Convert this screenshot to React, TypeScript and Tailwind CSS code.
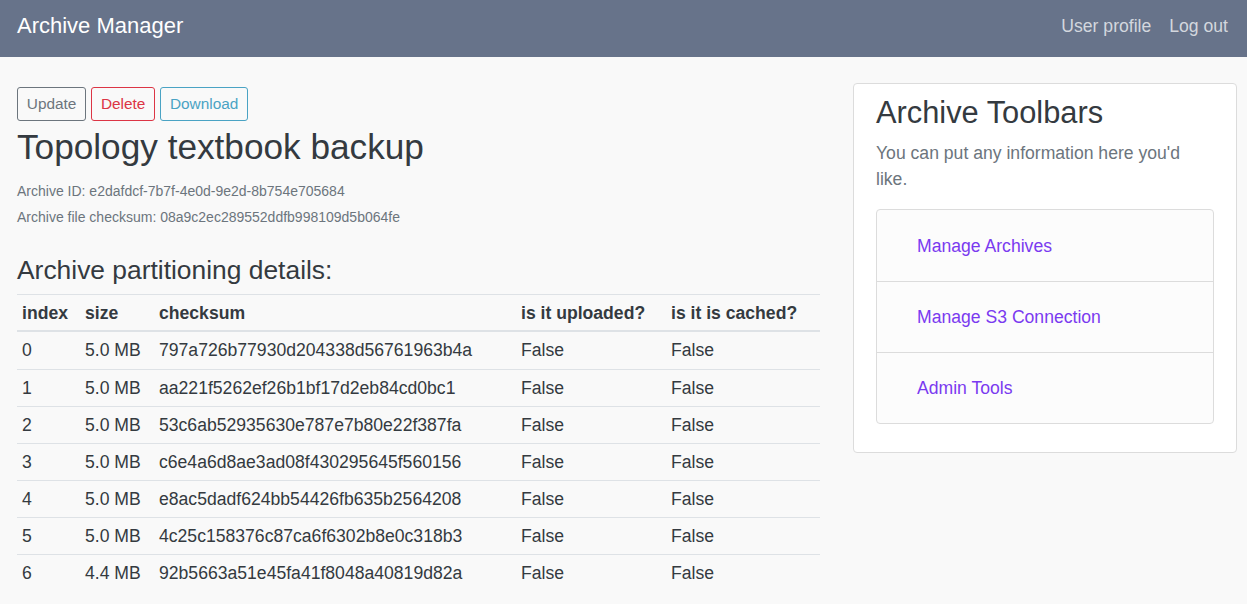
import React from "react";

const rows = [
  ["0", "5.0 MB", "797a726b77930d204338d56761963b4a"],
  ["1", "5.0 MB", "aa221f5262ef26b1bf17d2eb84cd0bc1"],
  ["2", "5.0 MB", "53c6ab52935630e787e7b80e22f387fa"],
  ["3", "5.0 MB", "c6e4a6d8ae3ad08f430295645f560156"],
  ["4", "5.0 MB", "e8ac5dadf624bb54426fb635b2564208"],
  ["5", "5.0 MB", "4c25c158376c87ca6f6302b8e0c318b3"],
  ["6", "4.4 MB", "92b5663a51e45fa41f8048a40819d82a"],
];

export default function App() {
  return (
    <div
      className="min-h-[604px] bg-[#f9f9f9] text-[#343a40] text-[17.6px] leading-[26.4px]"
      style={{ fontFamily: '"Liberation Sans", Arial, sans-serif' }}
    >
      <nav className="h-[57px] bg-[#67738a] flex items-center justify-between pl-[17px] pr-[19px] pb-[4px]">
        <span className="text-white text-[22px]">Archive Manager</span>
        <div className="flex gap-[18px] text-[#d3d7de]">
          <span>User profile</span>
          <span>Log out</span>
        </div>
      </nav>

      <div className="flex pl-[17px] pr-[10px] pt-[26px] gap-[33px]">
        <div className="w-[803px] pt-[4px]">
          <div className="flex gap-[4.9px]">
            <button className="h-[34px] px-[8.8px] border border-[#6c757d] text-[#6c757d] rounded-[3px] text-[15.4px]">
              Update
            </button>
            <button className="h-[34px] px-[8.8px] border border-[#dc3545] text-[#dc3545] rounded-[3px] text-[15.4px]">
              Delete
            </button>
            <button className="h-[34px] px-[8.8px] border border-[#4aa3c4] text-[#4aa3c4] rounded-[3px] text-[15.4px]">
              Download
            </button>
          </div>
          <h2 className="text-[35.2px] leading-[42px] mt-[5px] text-[#343a40]">
            Topology textbook backup
          </h2>
          <div className="mt-[10px] text-[14px] leading-[26px] text-[#6c757d]">
            <div>Archive ID: e2dafdcf-7b7f-4e0d-9e2d-8b754e705684</div>
            <div>Archive file checksum: 08a9c2ec289552ddfb998109d5b064fe</div>
          </div>
          <h4 className="mt-[24px] text-[26.4px] leading-[32px] mb-[8px]">
            Archive partitioning details:
          </h4>
          <table className="w-full table-fixed border-collapse">
            <colgroup>
              <col className="w-[63px]" />
              <col className="w-[74px]" />
              <col className="w-[362px]" />
              <col className="w-[150px]" />
              <col />
            </colgroup>
            <thead>
              <tr className="text-left font-bold">
                {["index", "size", "checksum", "is it uploaded?", "is it is cached?"].map((h) => (
                  <th
                    key={h}
                    className="border-t border-t-[#dee2e6] border-b-2 border-b-[#dee2e6] px-[5px] pt-[5px] pb-[4px] leading-[26px] font-bold whitespace-nowrap"
                  >
                    {h}
                  </th>
                ))}
              </tr>
            </thead>
            <tbody>
              {rows.map((r, i) => {
                const cls =
                  i === 0
                    ? "border-t border-t-[#dee2e6] px-[5px] pt-[5px] pb-[6px] leading-[26px]"
                    : "border-t border-t-[#dee2e6] px-[5px] py-[5px] leading-[26px]";
                return (
                  <tr key={r[0]}>
                    <td className={cls}>{r[0]}</td>
                    <td className={`${cls} whitespace-nowrap`}>{r[1]}</td>
                    <td className={cls}>{r[2]}</td>
                    <td className={cls}>False</td>
                    <td className={cls}>False</td>
                  </tr>
                );
              })}
            </tbody>
          </table>
        </div>

        <div className="w-[384px]">
          <div className="bg-white border border-[#dcdcdc] rounded-[4px] px-[22px] pt-[10px] pb-[28px]">
            <h3 className="text-[30.8px] leading-[37px] text-[#343a40]">Archive Toolbars</h3>
            <p className="mt-[9px] text-[#6c757d] leading-[26.4px]">
              You can put any information here you'd like.
            </p>
            <div className="mt-[16px] border border-[#dcdcdc] rounded-[4px] bg-[#fcfcfc]">
              {["Manage Archives", "Manage S3 Connection", "Admin Tools"].map((t, i) => (
                <div
                  key={t}
                  className={`h-[71px] flex items-center pl-[40px] pt-[1px] text-[#7a3af0] ${i > 0 ? "border-t border-t-[#dcdcdc]" : ""}`}
                >
                  {t}
                </div>
              ))}
            </div>
          </div>
        </div>
      </div>
    </div>
  );
}
